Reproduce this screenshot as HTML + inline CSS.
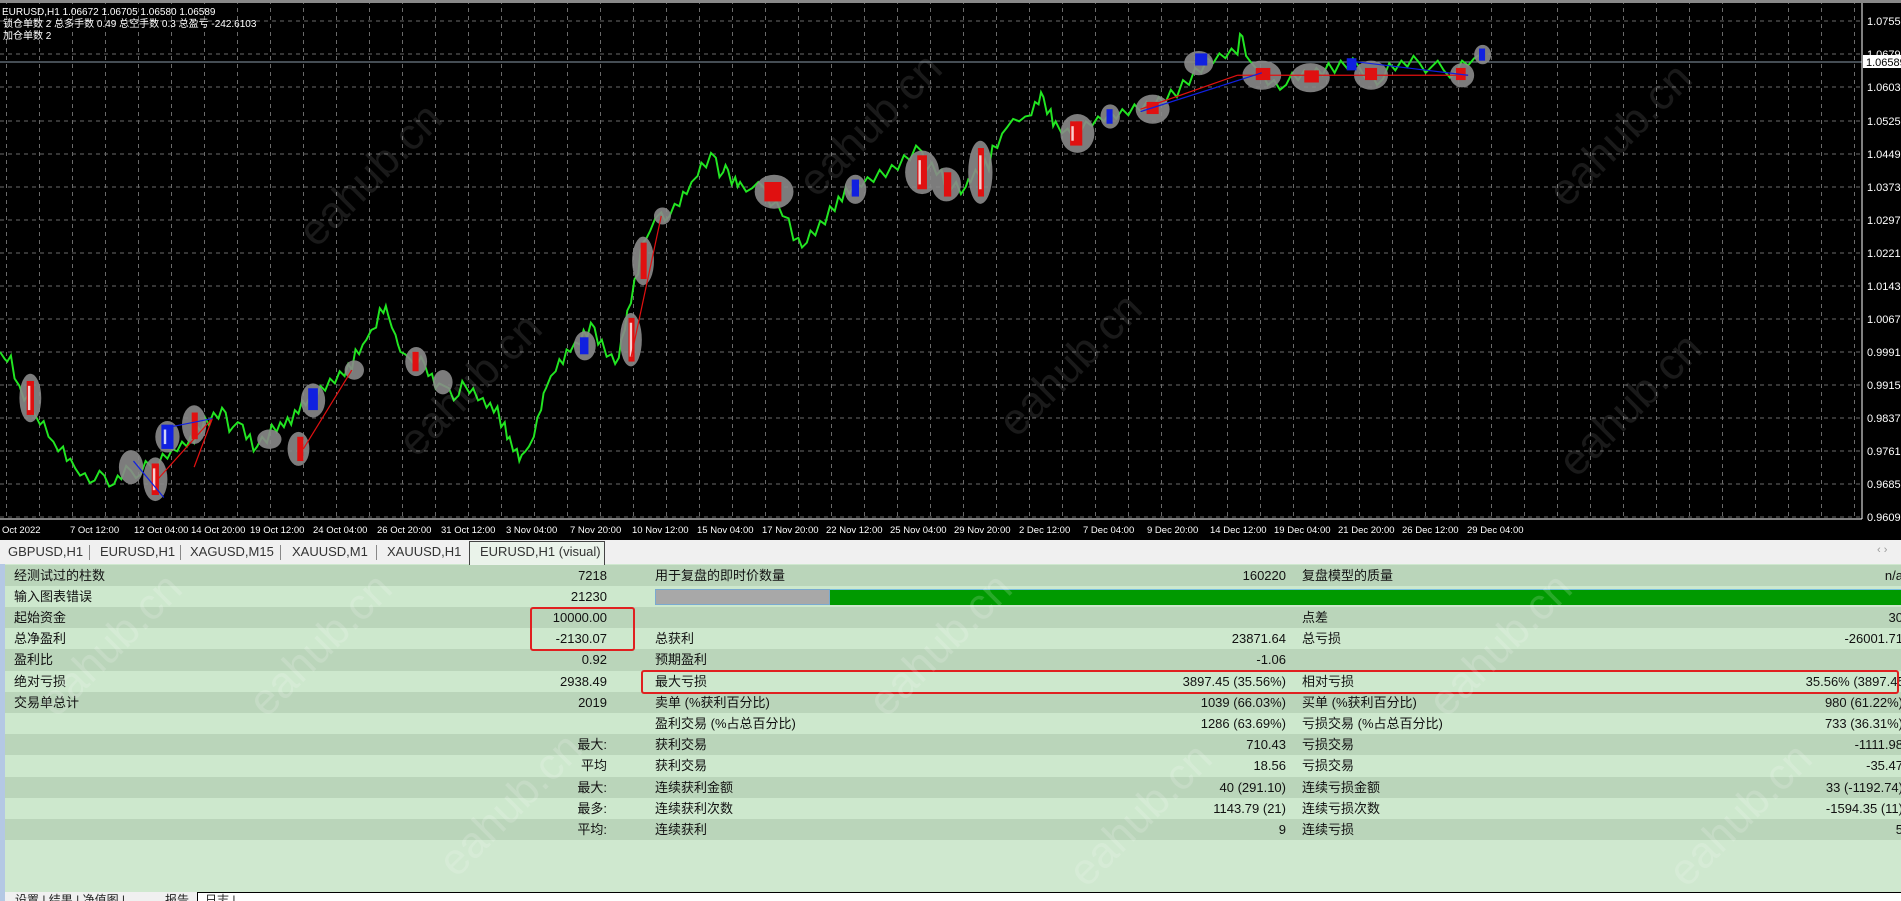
<!DOCTYPE html>
<html><head><meta charset="utf-8"><style>
*{margin:0;padding:0;box-sizing:border-box}
body{width:1901px;height:901px;overflow:hidden;background:#cfe8cf;font-family:"Liberation Sans","Noto Sans CJK SC",sans-serif;position:relative}
#chart{position:absolute;left:0;top:0;width:1901px;height:540px;background:#000}
.tabs{position:absolute;left:0;top:540px;width:1901px;height:24px;background:#f0f0f0;font-size:13px;color:#333}
.tabs span{position:absolute;top:4px}
.sep{position:absolute;top:5px;width:1px;height:15px;background:#888}
.row{position:absolute;left:5px;width:1896px;height:21.2px;font-size:13px;color:#111;line-height:21px}
.d{background:#bad5ba}.l{background:#cde8cd}
.row span{position:absolute;white-space:nowrap}
.r1{right:1294px}.r2{right:615px}.r3{right:-2px}
.a{left:9px}.b{left:650px}.c{left:1297px}
.box{position:absolute;border:2px solid #e02020;border-radius:3px}
.wm{position:absolute;font-size:44px;color:rgba(255,255,255,.16);transform:rotate(-45deg);font-family:"Liberation Sans",sans-serif;white-space:nowrap}
.wc{color:rgba(255,255,255,.10)}
</style></head><body>
<div id="chart">
<svg width="1901" height="540" style="position:absolute;left:0;top:0">
<defs><pattern id="vp" x="6" y="0" width="33" height="540" patternUnits="userSpaceOnUse"><line x1="0.5" y1="0" x2="0.5" y2="540" stroke="#6a6a6a" stroke-dasharray="4,4"/></pattern></defs>
<rect x="0" y="3" width="1862" height="516" fill="url(#vp)"/>
<rect x="0" y="0" width="1901" height="3" fill="#888"/>
<g stroke="#6a6a6a" stroke-dasharray="4,4" stroke-width="1">
<line x1="0" x2="1862" y1="21" y2="21"/><line x1="0" x2="1862" y1="54" y2="54"/><line x1="0" x2="1862" y1="87" y2="87"/><line x1="0" x2="1862" y1="121" y2="121"/><line x1="0" x2="1862" y1="154" y2="154"/><line x1="0" x2="1862" y1="187" y2="187"/><line x1="0" x2="1862" y1="220" y2="220"/><line x1="0" x2="1862" y1="253" y2="253"/><line x1="0" x2="1862" y1="286" y2="286"/><line x1="0" x2="1862" y1="319" y2="319"/><line x1="0" x2="1862" y1="352" y2="352"/><line x1="0" x2="1862" y1="385" y2="385"/><line x1="0" x2="1862" y1="418" y2="418"/><line x1="0" x2="1862" y1="451" y2="451"/><line x1="0" x2="1862" y1="484" y2="484"/><line x1="0" x2="1862" y1="517" y2="517"/>
</g>
<line x1="0" x2="1862" y1="62" y2="62" stroke="#8a9aa8"/>
<line x1="1862" x2="1862" y1="3" y2="519" stroke="#fff"/>
<line x1="0" x2="1862" y1="519" y2="519" stroke="#fff"/>
<g transform="scale(1.2133)">
<polyline fill="none" stroke="#22e622" stroke-width="1.6" points="0,290 4,296 6,298 9,293 12,312 16,318 20,330 23,326 26,338 30,344 33,350 36,347 40,360 44,364 48,372 52,368 55,380 58,378 62,386 66,392 70,390 74,398 78,396 82,388 86,392 90,401 94,399 97,392 100,395 104,384 108,388 112,394 116,391 120,380 124,384 127,389 130,385 134,374 138,378 142,370 146,372 150,364 154,368 157,360 160,365 163,352 166,356 169,344 172,350 176,340 180,345 183,336 186,340 189,356 192,352 196,348 200,350 203,362 206,358 209,372 212,368 216,360 220,365 224,350 228,356 231,348 234,352 237,344 240,350 243,338 246,341 249,330 252,334 256,326 260,330 264,318 268,322 272,312 276,316 280,306 284,310 287,300 290,305 293,288 296,292 299,284 302,280 306,272 310,270 313,254 316,258 318,252 320,260 323,270 326,276 328,284 330,290 334,292 338,296 341,300 344,300 347,294 350,300 353,310 356,308 359,320 362,316 366,318 370,320 374,330 378,326 381,314 384,319 387,324 390,320 394,330 398,328 401,336 404,332 407,340 410,335 413,352 416,348 418,362 420,360 423,372 426,370 428,380 430,375 433,372 436,368 438,364 440,360 443,344 446,338 448,324 450,320 454,310 458,306 461,296 464,300 467,288 470,290 474,282 478,284 481,272 484,278 487,266 490,270 493,284 496,280 500,294 504,292 507,300 510,295 512,280 515,272 517,256 520,250 523,230 526,226 528,206 530,200 533,196 536,190 540,180 545,175 548,182 552,178 556,168 560,170 563,158 566,160 570,150 575,145 578,134 582,138 586,126 590,130 593,146 596,142 598,136 600,140 603,152 606,146 608,154 610,150 615,158 620,155 625,150 630,155 635,170 640,166 645,178 650,180 654,198 658,196 661,204 665,200 668,190 672,194 676,182 680,185 684,170 688,174 691,162 694,166 697,154 700,160 705,150 710,154 715,146 720,150 725,140 730,146 735,136 740,140 745,128 750,132 755,120 760,125 764,140 768,134 772,144 776,140 778,150 780,145 784,156 788,150 792,160 796,154 798,148 800,150 804,140 808,146 812,132 815,140 818,120 822,122 826,110 830,105 835,98 840,100 845,96 850,95 853,84 856,86 858,76 860,80 863,94 866,90 868,104 870,100 875,110 880,106 885,114 890,110 895,100 900,104 905,96 910,100 915,92 920,98 925,90 930,95 935,86 940,92 945,84 950,90 955,80 960,86 965,74 970,80 975,66 980,70 985,56 990,60 995,48 1000,52 1005,44 1010,48 1015,40 1020,45 1022,28 1024,30 1027,46 1030,50 1035,56 1040,60 1045,70 1050,66 1055,74 1060,70 1065,60 1070,66 1075,58 1080,65 1085,56 1090,62 1095,52 1100,60 1105,50 1110,56 1115,48 1120,55 1125,64 1130,60 1135,70 1140,65 1145,52 1150,58 1155,50 1160,55 1165,46 1170,52 1175,60 1180,55 1185,50 1190,58 1195,64 1200,60 1205,50 1210,54 1215,48 1220,45"/>
<g fill="#8a8a8a" opacity="0.9">
<ellipse cx="25" cy="328" rx="9" ry="20"/><ellipse cx="108" cy="385" rx="10" ry="14"/><ellipse cx="128" cy="395" rx="10" ry="18"/><ellipse cx="138" cy="360" rx="10" ry="13"/><ellipse cx="160" cy="350" rx="10" ry="16"/><ellipse cx="222" cy="362" rx="10" ry="8"/><ellipse cx="246" cy="370" rx="9" ry="14"/><ellipse cx="258" cy="330" rx="10" ry="14"/><ellipse cx="292" cy="305" rx="8" ry="8"/><ellipse cx="343" cy="298" rx="9" ry="12"/><ellipse cx="365" cy="315" rx="8" ry="10"/><ellipse cx="482" cy="285" rx="9" ry="12"/><ellipse cx="520" cy="280" rx="9" ry="22"/><ellipse cx="530" cy="215" rx="9" ry="20"/><ellipse cx="546" cy="178" rx="7" ry="7"/><ellipse cx="638" cy="158" rx="16" ry="14"/><ellipse cx="705" cy="156" rx="9" ry="12"/><ellipse cx="760" cy="142" rx="14" ry="18"/><ellipse cx="780" cy="152" rx="12" ry="14"/><ellipse cx="808" cy="142" rx="10" ry="26"/><ellipse cx="888" cy="110" rx="14" ry="16"/><ellipse cx="915" cy="96" rx="8" ry="10"/><ellipse cx="950" cy="90" rx="14" ry="12"/><ellipse cx="988" cy="52" rx="12" ry="10"/><ellipse cx="1040" cy="62" rx="16" ry="12"/><ellipse cx="1080" cy="64" rx="16" ry="12"/><ellipse cx="1130" cy="62" rx="14" ry="12"/><ellipse cx="1205" cy="62" rx="10" ry="10"/><ellipse cx="1222" cy="45" rx="7" ry="8"/>
</g>
<g fill="#e01010">
<rect x="22" y="314" width="6" height="28"/><rect x="125" y="382" width="6" height="26"/><rect x="158" y="340" width="5" height="22"/><rect x="245" y="360" width="5" height="20"/><rect x="340" y="290" width="5" height="16"/><rect x="518" y="262" width="5" height="36"/><rect x="528" y="200" width="5" height="30"/><rect x="630" y="150" width="14" height="16"/><rect x="756" y="128" width="8" height="28"/><rect x="778" y="142" width="6" height="20"/><rect x="806" y="122" width="5" height="40"/><rect x="882" y="100" width="10" height="20"/><rect x="945" y="84" width="10" height="10"/><rect x="1035" y="56" width="12" height="10"/><rect x="1075" y="58" width="12" height="10"/><rect x="1125" y="56" width="10" height="10"/><rect x="1200" y="56" width="8" height="10"/>
</g>
<g fill="#1020e0">
<rect x="133" y="350" width="10" height="20"/><rect x="254" y="320" width="8" height="18"/><rect x="478" y="278" width="7" height="14"/><rect x="702" y="148" width="6" height="14"/><rect x="912" y="90" width="5" height="12"/><rect x="985" y="44" width="10" height="10"/><rect x="1110" y="48" width="8" height="10"/><rect x="1219" y="40" width="5" height="10"/>
</g>
<g fill="#fff" opacity="0.8">
<rect x="23" y="318" width="2" height="20"/><rect x="126" y="386" width="2" height="18"/><rect x="519" y="266" width="2" height="28"/><rect x="757" y="132" width="2" height="20"/><rect x="807" y="128" width="2" height="28"/><rect x="883" y="104" width="2" height="12"/><rect x="135" y="354" width="2" height="12"/>
</g>
<g stroke="#e01010" stroke-width="1"><line x1="130" y1="395" x2="175" y2="345"/><line x1="160" y1="385" x2="175" y2="345"/><line x1="250" y1="370" x2="290" y2="305"/><line x1="520" y1="295" x2="545" y2="178"/><line x1="940" y1="90" x2="1020" y2="62"/><line x1="1020" y1="62" x2="1210" y2="62"/></g>
<g stroke="#1020e0" stroke-width="1"><line x1="110" y1="380" x2="135" y2="410"/><line x1="140" y1="352" x2="175" y2="345"/><line x1="940" y1="92" x2="1040" y2="60"/><line x1="1110" y1="50" x2="1210" y2="62"/></g>
</g>
<rect x="1863" y="55" width="38" height="13" fill="#fff"/>
<g fill="#fff" font-size="11" font-family="Liberation Sans,sans-serif">
<text x="1867" y="25">1.07550</text><text x="1867" y="58">1.06790</text><text x="1867" y="91">1.06030</text><text x="1867" y="125">1.05250</text><text x="1867" y="158">1.04490</text><text x="1867" y="191">1.03730</text><text x="1867" y="224">1.02970</text><text x="1867" y="257">1.02210</text><text x="1867" y="290">1.01430</text><text x="1867" y="323">1.00670</text><text x="1867" y="356">0.99910</text><text x="1867" y="389">0.99150</text><text x="1867" y="422">0.98370</text><text x="1867" y="455">0.97610</text><text x="1867" y="488">0.96850</text><text x="1867" y="521">0.96090</text>
</g>
<text x="1866" y="66" fill="#000" font-size="11" font-family="Liberation Sans,sans-serif">1.06589</text>
<g fill="#fff" font-size="9.5" font-family="Liberation Sans,sans-serif">
<text x="2" y="533">Oct 2022</text><text x="70" y="533">7 Oct 12:00</text><text x="134" y="533">12 Oct 04:00</text><text x="191" y="533">14 Oct 20:00</text><text x="250" y="533">19 Oct 12:00</text><text x="313" y="533">24 Oct 04:00</text><text x="377" y="533">26 Oct 20:00</text><text x="441" y="533">31 Oct 12:00</text><text x="506" y="533">3 Nov 04:00</text><text x="570" y="533">7 Nov 20:00</text><text x="632" y="533">10 Nov 12:00</text><text x="697" y="533">15 Nov 04:00</text><text x="762" y="533">17 Nov 20:00</text><text x="826" y="533">22 Nov 12:00</text><text x="890" y="533">25 Nov 04:00</text><text x="954" y="533">29 Nov 20:00</text><text x="1019" y="533">2 Dec 12:00</text><text x="1083" y="533">7 Dec 04:00</text><text x="1147" y="533">9 Dec 20:00</text><text x="1210" y="533">14 Dec 12:00</text><text x="1274" y="533">19 Dec 04:00</text><text x="1338" y="533">21 Dec 20:00</text><text x="1402" y="533">26 Dec 12:00</text><text x="1467" y="533">29 Dec 04:00</text>
</g>
<g fill="#fff" font-size="10" font-family="Liberation Sans,Noto Sans CJK SC,sans-serif">
<text x="2" y="15">EURUSD,H1  1.06672 1.06705 1.06580 1.06589</text>
<text x="3" y="27">锁仓单数 2 总多手数 0.49 总空手数 0.3 总盈亏 -242.6103</text>
<text x="3" y="39">加仓单数 2</text>
</g>
</svg>
<div class="wm wc" style="left:280px;top:150px">eahub.cn</div>
<div class="wm wc" style="left:780px;top:100px">eahub.cn</div>
<div class="wm wc" style="left:1530px;top:110px">eahub.cn</div>
<div class="wm wc" style="left:380px;top:360px">eahub.cn</div>
<div class="wm wc" style="left:980px;top:340px">eahub.cn</div>
<div class="wm wc" style="left:1540px;top:380px">eahub.cn</div>
</div>
<div class="tabs">
<span style="left:8px">GBPUSD,H1</span><div class="sep" style="left:89px"></div>
<span style="left:100px">EURUSD,H1</span><div class="sep" style="left:180px"></div>
<span style="left:190px">XAGUSD,M15</span><div class="sep" style="left:280px"></div>
<span style="left:292px">XAUUSD,M1</span><div class="sep" style="left:376px"></div>
<span style="left:387px">XAUUSD,H1</span>
<div style="position:absolute;left:469px;top:1px;width:136px;height:24px;background:#eaf3ea;border:1px solid #444;border-bottom:none"></div>
<span style="left:480px">EURUSD,H1 (visual)</span>
<span style="left:1877px;color:#999;font-size:11px">‹ ›</span>
</div>
<div style="position:absolute;left:0;top:564px;width:5px;height:337px;background:#b4c8e4"></div>
<div class="row d" style="top:564.6px"><span class="a">经测试过的柱数</span><span class="r1">7218</span><span class="b">用于复盘的即时价数量</span><span class="r2">160220</span><span class="c">复盘模型的质量</span><span class="r3">n/a</span></div>
<div class="row l" style="top:585.8px"><span class="a">输入图表错误</span><span class="r1">21230</span>
<div style="position:absolute;left:650px;top:3px;width:175px;height:16px;background:#a8a8a8;border:1px solid #7aaad0"></div><div style="position:absolute;left:825px;top:3px;width:1075px;height:16px;background:#009a00;border-top:1px solid #7ac0e0"></div></div>
<div class="row d" style="top:607px"><span class="a">起始资金</span><span class="r1">10000.00</span><span class="c">点差</span><span class="r3">30</span></div>
<div class="row l" style="top:628.2px"><span class="a">总净盈利</span><span class="r1">-2130.07</span><span class="b">总获利</span><span class="r2">23871.64</span><span class="c">总亏损</span><span class="r3">-26001.71</span></div>
<div class="row d" style="top:649.4px"><span class="a">盈利比</span><span class="r1">0.92</span><span class="b">预期盈利</span><span class="r2">-1.06</span></div>
<div class="row l" style="top:670.6px"><span class="a">绝对亏损</span><span class="r1">2938.49</span><span class="b">最大亏损</span><span class="r2">3897.45 (35.56%)</span><span class="c">相对亏损</span><span class="r3" style="right:-8px">35.56% (3897.45)</span></div>
<div class="row d" style="top:691.8px"><span class="a">交易单总计</span><span class="r1">2019</span><span class="b">卖单 (%获利百分比)</span><span class="r2">1039 (66.03%)</span><span class="c">买单 (%获利百分比)</span><span class="r3">980 (61.22%)</span></div>
<div class="row l" style="top:713px"><span class="b">盈利交易 (%占总百分比)</span><span class="r2">1286 (63.69%)</span><span class="c">亏损交易 (%占总百分比)</span><span class="r3">733 (36.31%)</span></div>
<div class="row d" style="top:734.2px"><span class="r1">最大:</span><span class="b">获利交易</span><span class="r2">710.43</span><span class="c">亏损交易</span><span class="r3">-1111.98</span></div>
<div class="row l" style="top:755.4px"><span class="r1">平均</span><span class="b">获利交易</span><span class="r2">18.56</span><span class="c">亏损交易</span><span class="r3">-35.47</span></div>
<div class="row d" style="top:776.6px"><span class="r1">最大:</span><span class="b">连续获利金额</span><span class="r2">40 (291.10)</span><span class="c">连续亏损金额</span><span class="r3">33 (-1192.74)</span></div>
<div class="row l" style="top:797.8px"><span class="r1">最多:</span><span class="b">连续获利次数</span><span class="r2">1143.79 (21)</span><span class="c">连续亏损次数</span><span class="r3">-1594.35 (11)</span></div>
<div class="row d" style="top:819px"><span class="r1">平均:</span><span class="b">连续获利</span><span class="r2">9</span><span class="c">连续亏损</span><span class="r3">5</span></div>
<div class="box" style="left:530px;top:607px;width:105px;height:44px"></div>
<div class="box" style="left:641px;top:670px;width:1258px;height:24px"></div>
<div style="position:absolute;left:5px;top:892px;width:1896px;height:9px;background:#f0f0f0;font-size:12px;line-height:18px;color:#222;overflow:hidden">
<span style="position:absolute;left:10px;top:-1px">设置 | 结果 | 净值图 | </span><span style="position:absolute;left:160px;top:-1px">报告</span>
<div style="position:absolute;left:192px;top:0;width:1704px;height:9px;background:#fff;border-left:1px solid #000;border-top:1px solid #000"></div><span style="position:absolute;left:200px;top:-1px">日志 |</span></div>
<div class="wm" style="left:20px;top:620px">eahub.cn</div>
<div class="wm" style="left:230px;top:620px">eahub.cn</div>
<div class="wm" style="left:420px;top:780px">eahub.cn</div>
<div class="wm" style="left:850px;top:620px">eahub.cn</div>
<div class="wm" style="left:1410px;top:620px">eahub.cn</div>
<div class="wm" style="left:1050px;top:790px">eahub.cn</div>
<div class="wm" style="left:1650px;top:790px">eahub.cn</div>
</body></html>
